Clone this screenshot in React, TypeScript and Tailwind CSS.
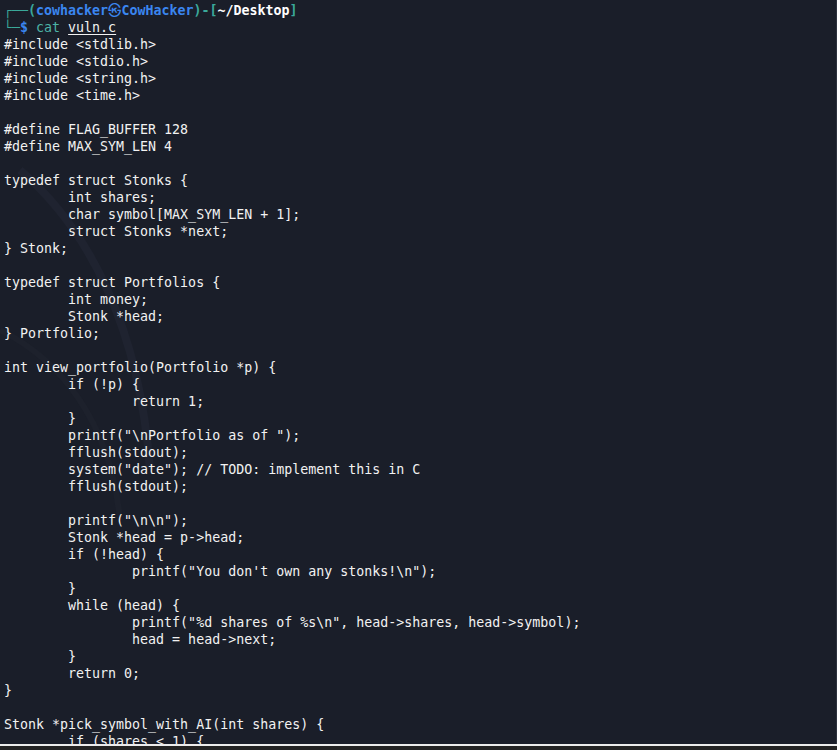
const CODE = `#include <stdlib.h>
#include <stdio.h>
#include <string.h>
#include <time.h>

#define FLAG_BUFFER 128
#define MAX_SYM_LEN 4

typedef struct Stonks {
        int shares;
        char symbol[MAX_SYM_LEN + 1];
        struct Stonks *next;
} Stonk;

typedef struct Portfolios {
        int money;
        Stonk *head;
} Portfolio;

int view_portfolio(Portfolio *p) {
        if (!p) {
                return 1;
        }
        printf("\\nPortfolio as of ");
        fflush(stdout);
        system("date"); // TODO: implement this in C
        fflush(stdout);

        printf("\\n\\n");
        Stonk *head = p->head;
        if (!head) {
                printf("You don't own any stonks!\\n");
        }
        while (head) {
                printf("%d shares of %s\\n", head->shares, head->symbol);
                head = head->next;
        }
        return 0;
}

Stonk *pick_symbol_with_AI(int shares) {
        if (shares < 1) {`;

export default function App() {
  const lines = CODE.split('\n');
  return (
    <div className="flex flex-col h-[750px] w-[837px] bg-[#1a1e29] overflow-hidden">
      <div className="relative flex-1 overflow-hidden border-r border-[#2c313d]">
        {/* faint wallpaper strokes */}
        <svg className="absolute inset-0 pointer-events-none" width="837" height="744">
          <path d="M20 170 C 90 230, 140 330, 150 470" stroke="#1f2330" strokeWidth="8" fill="none" />
          <path d="M0 330 C 60 360, 110 420, 120 520" stroke="#1d212c" strokeWidth="6" fill="none" />
        </svg>
        <div className="relative pl-[4px] pt-[2px] font-['DejaVu_Sans_Mono','Noto_Sans_CJK_KR',monospace] text-[13.3px] leading-[17px] text-[#f2f2f2] whitespace-pre">
          <div className="font-bold">
            <span className="text-[#3aa89a]">┌──(</span>
            <span className="text-[#3a86f0]">cowhacker㉿CowHacker</span>
            <span className="text-[#3aa89a]">)-[</span>
            <span className="text-white">~/Desktop</span>
            <span className="text-[#3aa89a]">]</span>
          </div>
          <div>
            <span className="text-[#3aa89a] font-bold">└─</span>
            <span className="text-[#3a86f0] font-bold">$</span>
            <span> </span>
            <span className="text-[#4cb3a6]">cat</span>
            <span> </span>
            <span className="underline underline-offset-2">vuln.c</span>
          </div>
          {lines.map((line, i) => (
            <div key={i} className="h-[17px]">
              {line}
            </div>
          ))}
        </div>
      </div>
      <div className="h-[2px] bg-[#ececec]" />
      <div className="h-[4px] bg-[#232323]" />
    </div>
  );
}
